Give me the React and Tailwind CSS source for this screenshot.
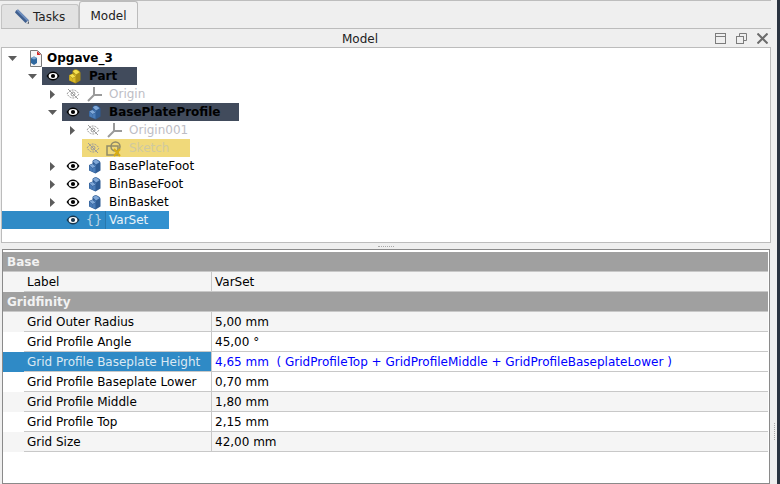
import React from "react";

/* =========================
   ICONS
========================= */

function Arrow({ dir }) {
  if (dir === "down") {
    return (
      <svg width="9" height="5" viewBox="0 0 9 5">
        <path d="M0 0h9L4.500 5z" fill="#5c5c5c" />
      </svg>
    );
  }
  return (
    <svg width="5" height="9" viewBox="0 0 5 9">
      <path d="M0 0v9l5-4.500z" fill="#5c5c5c" />
    </svg>
  );
}

function Eye({ off, light }) {
  if (off) {
    return (
      <svg width="14" height="12" viewBox="0 0 14 12" fill="none" stroke="#9a9a9a" strokeWidth="1">
        <path d="M1 6c2-3 4-4 6-4s4 1 6 4c-2 3-4 4-6 4s-4-1-6-4z" strokeDasharray="2 1" />
        <circle cx="7" cy="6" r="2" />
        <path d="M2 1l10 10" />
      </svg>
    );
  }
  return (
    <svg width="14" height="10" viewBox="0 0 14 10">
      <path d="M0.500 5C2.500 1.800 4.800 .5 7 .5s4.500 1.300 6.500 4.500C11.500 8.200 9.200 9.500 7 9.500S2.500 8.200.5 5z" fill={light ? "#16364e" : "#000"} />
      <ellipse cx="7" cy="5" rx="4.400" ry="3" fill="#fff" />
      <circle cx="7" cy="5" r="2.100" fill={light ? "#16364e" : "#000"} />
    </svg>
  );
}

function Block({ yellow }) {
  const top = yellow ? "#f4e04e" : "#80a8d8";
  const mid = yellow ? "#d8b828" : "#4a7cb8";
  const dark = yellow ? "#a88c18" : "#2f5c94";
  return (
    <svg width="13" height="15" viewBox="0 0 13 15">
      <path d="M4.500 2C5.500.5 7.500 0 9 .5c2 .7 3.500 2 3.500 3.500v7.500L7.500 14.500 1 11.500V6l3.500-1.500z" fill={dark} />
      <path d="M5 2.500C6 1 8 .8 9 1.300c1 .5 2 1.200 2.500 2L8 5.500z" fill={top} />
      <path d="M1.500 6.500l3-1.500 3 2.500-3 1.500z" fill={top} />
      <path d="M5 5l3 .8v1.700L5 5z" fill={mid} />
      <path d="M1.500 7L4.500 9.500v3.300l-3-1.600z" fill={mid} />
      <path d="M4.500 9.500l3-1.500v5.800l-3-1z" fill={mid} />
    </svg>
  );
}

function Axes() {
  return (
    <svg width="15" height="16" viewBox="0 0 15 16" fill="none" stroke="#9a9a9a" strokeWidth="2">
      <path d="M7 1v9" />
      <path d="M7 9h8" />
      <path d="M7 9l-6 6" />
    </svg>
  );
}

function SketchIcon() {
  return (
    <svg width="17" height="17" viewBox="0 0 17 17" fill="none">
      <rect x="1" y="6" width="11" height="9" stroke="#8f8a68" strokeWidth="1.500" />
      <circle cx="9.500" cy="6.500" r="4.500" stroke="#8f8a68" strokeWidth="1.500" />
      <path d="M8 9l6 7M14 9l-6 7" stroke="#d8ad12" strokeWidth="2" />
    </svg>
  );
}

function DocIcon() {
  return (
    <svg width="13" height="17" viewBox="0 0 13 17">
      <path d="M1.500.5h7l4 4v12h-11z" fill="#f6f6f6" stroke="#7a7a7a" />
      <path d="M8 1l4 4H8z" fill="#d22a2a" />
      <path d="M2 8l3-1.500L8 8v5l-3 2-3-2z" fill="#2f689f" />
      <path d="M2 8l3-1.500L8 8 5 9.500z" fill="#7ba8d4" />
    </svg>
  );
}

function PencilIcon() {
  return (
    <svg width="16" height="16" viewBox="0 0 16 16">
      <path d="M2 1.500L4 .5l10.500 10.500.5 3.500-3.500-.5L1 3.500z" fill="#3f5f8f" />
      <path d="M4 .5l10.500 10.500-1.500 1L2.500 1.500z" fill="#6f8fbf" />
      <path d="M15 14.500l-3.500-.5 2.500-2.500z" fill="#d8d8d8" />
      <path d="M15 14.500l-1.500-.2 1.300-1.300z" fill="#222" />
    </svg>
  );
}

/* =========================
   TREE
========================= */

function TreeRow({ arrowClass, arrow, children }) {
  return (
    <div className="flex h-[18px] items-center">
      <div className={`${arrowClass} flex h-full shrink-0 items-center justify-center`}>
        {arrow && <Arrow dir={arrow} />}
      </div>
      {children}
    </div>
  );
}

function Tree() {
  return (
    <div className="h-[196px] border border-[#bcbcbc] bg-white pt-px">
      {/* document */}
      <TreeRow arrowClass="w-[20px]" arrow="down">
        <div className="flex w-[25px] justify-center pl-[1px]"><DocIcon /></div>
        <span className="font-bold text-black">Opgave_3</span>
      </TreeRow>

      {/* part */}
      <TreeRow arrowClass="ml-[20px] w-[20px]" arrow="down">
        <div className="flex h-full w-[95px] items-center bg-[#414b5c]">
          <div className="flex w-[21px] justify-center"><Eye /></div>
          <div className="flex w-[22px] justify-center"><Block yellow /></div>
          <span className="pl-[4px] font-bold text-black">Part</span>
        </div>
      </TreeRow>

      <TreeRow arrowClass="ml-[40px] w-[20px]" arrow="right">
        <div className="flex w-[21px] justify-center"><Eye off /></div>
        <div className="flex w-[22px] justify-center"><Axes /></div>
        <span className="pl-[4px] text-[#bdbdc5]">Origin</span>
      </TreeRow>

      <TreeRow arrowClass="ml-[40px] w-[20px]" arrow="down">
        <div className="flex h-full w-[177px] items-center bg-[#414b5c]">
          <div className="flex w-[21px] justify-center"><Eye /></div>
          <div className="flex w-[22px] justify-center"><Block /></div>
          <span className="pl-[4px] font-bold text-black">BasePlateProfile</span>
        </div>
      </TreeRow>

      <TreeRow arrowClass="ml-[60px] w-[20px]" arrow="right">
        <div className="flex w-[21px] justify-center"><Eye off /></div>
        <div className="flex w-[22px] justify-center"><Axes /></div>
        <span className="pl-[4px] text-[#bdbdc5]">Origin001</span>
      </TreeRow>

      <TreeRow arrowClass="ml-[60px] w-[20px]">
        <div className="flex h-full w-[108px] items-center bg-[#f0d97a]">
          <div className="flex w-[21px] justify-center"><Eye off /></div>
          <div className="flex w-[22px] justify-center"><SketchIcon /></div>
          <span className="pl-[4px] text-[#cfc9a0]">Sketch</span>
        </div>
      </TreeRow>

      {["BasePlateFoot", "BinBaseFoot", "BinBasket"].map((name) => (
        <TreeRow key={name} arrowClass="ml-[40px] w-[20px]" arrow="right">
          <div className="flex w-[21px] justify-center"><Eye /></div>
          <div className="flex w-[22px] justify-center"><Block /></div>
          <span className="pl-[4px] text-black">{name}</span>
        </TreeRow>
      ))}

      {/* selected var set */}
      <div className="flex h-[18px] w-[167px] items-center bg-[#2f8ac6]">
        <div className="w-[60px]" />
        <div className="flex w-[21px] justify-center"><Eye light /></div>
        <div className="flex w-[22px] justify-center text-[13px] text-[#bcd3e3]">{"{}"}</div>
        <span className="h-full flex-1 border-l border-[#2878ad] bg-[#3291cf] pl-[3px] leading-[18px] text-[#e8f1f8]">VarSet</span>
      </div>
    </div>
  );
}

/* =========================
   PROPERTY TABLE
========================= */

const gridRows = [
  { name: "Grid Outer Radius", value: "5,00 mm" },
  { name: "Grid Profile Angle", value: "45,00 °" },
  { name: "Grid Profile Baseplate Height", value: "4,65 mm  ( GridProfileTop + GridProfileMiddle + GridProfileBaseplateLower )", selected: true },
  { name: "Grid Profile Baseplate Lower", value: "0,70 mm" },
  { name: "Grid Profile Middle", value: "1,80 mm" },
  { name: "Grid Profile Top", value: "2,15 mm" },
  { name: "Grid Size", value: "42,00 mm" },
];

function Section({ title }) {
  return (
    <div className="h-[20px] border-b border-[#c8c8c8] bg-[#a0a0a0] pl-[4px] font-bold leading-[20px] text-[#f2f2f2]">
      {title}
    </div>
  );
}

function PropRow({ row, alt }) {
  const bg = alt ? "bg-[#f5f5f5]" : "bg-white";
  return (
    <div className={`flex h-[20px] ${row.selected ? "bg-white" : bg}`}>
      <div className={`flex w-[208px] ${row.selected ? "bg-[#2f8ac6]" : ""}`}>
        <div className="w-[21px]" />
        <div className={`flex-1 border-b border-[#c8c8c8] pl-[3px] leading-[20px] ${row.selected ? "text-[#dbe9f3]" : "text-black"}`}>
          {row.name}
        </div>
      </div>
      <div className={`flex-1 whitespace-pre border-b border-l border-[#c8c8c8] pl-[3px] leading-[20px] ${row.selected ? "text-[#0000ff]" : "text-black"}`}>
        {row.value}
      </div>
    </div>
  );
}

function Properties() {
  return (
    <div className="ml-px mr-px flex-1 border border-[#8a8a8a] bg-white pb-px pr-px pt-[2px]">
      <Section title="Base" />
      <PropRow row={{ name: "Label", value: "VarSet" }} alt />
      <Section title="Gridfinity" />
      {gridRows.map((row, i) => (
        <PropRow key={row.name} row={row} alt={i % 2 === 0} />
      ))}
    </div>
  );
}

/* =========================
   APP
========================= */

export default function App() {
  return (
    <div className="flex h-[484px] w-[780px] overflow-hidden bg-[#efefef] font-['DejaVu_Sans',sans-serif] text-[12px]">
      <div className="flex w-[771px] shrink-0 flex-col border-t border-[#bdbdbd] pl-px">
        {/* tabs */}
        <div className="flex h-[28px] items-end border-b border-[#bcbcbc]">
          <div className="flex h-[24px] w-[78px] items-center gap-[3px] rounded-t-[3px] border border-b-0 border-[#c4c4c4] bg-[#e2e2e2] pl-[12px] pt-px text-[#222]">
            <PencilIcon />
            <span>Tasks</span>
          </div>
          <div className="flex h-[27px] w-[59px] items-center justify-center rounded-t-[3px] border border-b-0 border-[#bcbcbc] bg-[#f2f2f2] pt-px text-[#222]">
            Model
          </div>
        </div>

        {/* dock title */}
        <div className="flex h-[18px] items-center pr-[3px] pt-px">
          <div className="flex-1 pl-[4px] text-center text-[#222]">Model</div>
          <div className="flex items-center gap-[10px]">
            <svg width="11" height="11" viewBox="0 0 11 11" fill="none" stroke="#7c7c7c">
              <rect x=".5" y=".5" width="10" height="10" />
              <path d="M.5 3.500h10" />
            </svg>
            <svg width="11" height="11" viewBox="0 0 11 11" fill="none" stroke="#7c7c7c">
              <rect x=".5" y="3.500" width="7" height="7" />
              <path d="M3.500 3.500v-3h7v7h-3" />
            </svg>
            <svg width="11" height="11" viewBox="0 0 11 11" fill="none" stroke="#6c6c6c" strokeWidth="2">
              <path d="M.5.5l10 10M10.500.5l-10 10" />
            </svg>
          </div>
        </div>

        <Tree />

        {/* splitter */}
        <div className="flex h-[6px] items-center justify-center">
          <div className="h-px w-[16px] border-t border-dotted border-[#a8a8a8]" />
        </div>

        <Properties />
      </div>

      {/* right edge */}
      <div className="flex flex-1 items-end pb-[44px]">
        <div className="ml-[3px] h-[17px] w-px border-l border-dotted border-[#a8a8a8]" />
      </div>
      <div className="w-[3px] bg-[#2a3340]" />
    </div>
  );
}
